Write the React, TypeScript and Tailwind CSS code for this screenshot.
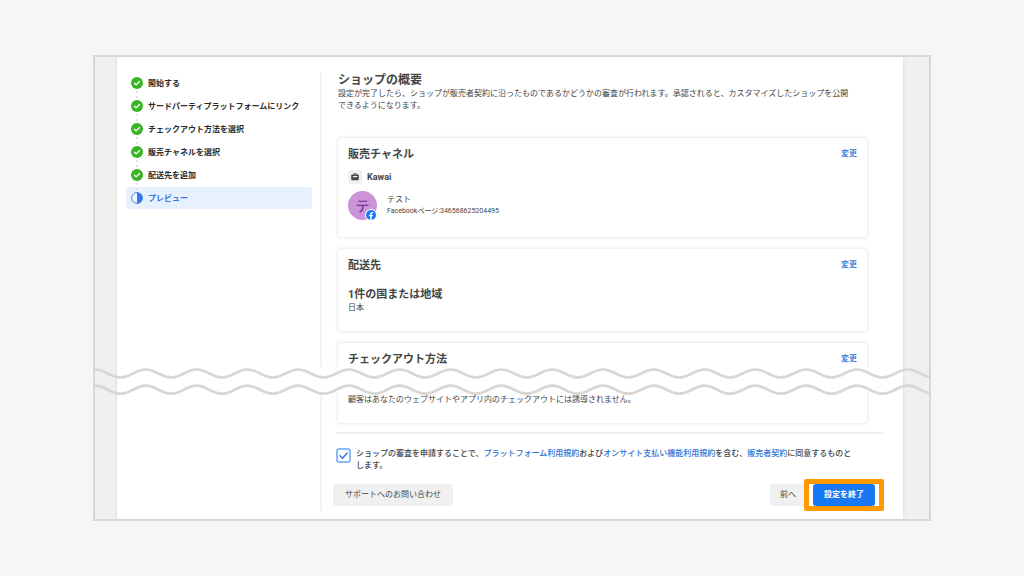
import { useState } from 'react'
import type { ReactNode } from 'react'
import clsx from 'clsx'

const steps = [
  { label: '開始する', done: true },
  { label: 'サードパーティプラットフォームにリンク', done: true },
  { label: 'チェックアウト方法を選択', done: true },
  { label: '販売チャネルを選択', done: true },
  { label: '配送先を追加', done: true },
  { label: 'プレビュー', done: false },
]

function DoneIcon() {
  return (
    <svg viewBox="0 0 12 12" className="size-3 shrink-0" aria-hidden="true">
      <circle cx="6" cy="6" r="6" fill="#3ab425" />
      <path d="M3.5 6.3 5.2 7.9 8.5 4.5" fill="none" stroke="#fff" strokeWidth="1.3" strokeLinecap="round" strokeLinejoin="round" />
    </svg>
  )
}

function CurrentIcon() {
  return (
    <svg viewBox="0 0 12 12" className="size-3 shrink-0" aria-hidden="true">
      <circle cx="6" cy="6" r="5.4" fill="#f4f8ff" stroke="#3578e5" strokeWidth="0.9" />
      <path d="M6 0.4a5.6 5.6 0 0 1 0 11.2z" fill="#3578e5" />
    </svg>
  )
}

function StepList() {
  return (
    <ol className="flex flex-col gap-px">
      {steps.map((step, i) => (
        <li key={step.label} className="relative">
          <a
            href="#"
            aria-current={step.done ? undefined : 'step'}
            className={clsx(
              'flex h-[22px] items-center gap-[5px] rounded-[3px] pl-[5px] text-[8px] font-bold whitespace-nowrap',
              step.done ? 'text-[#2b2b2b]' : 'bg-[#e7f0fd] text-[#3474dc]'
            )}
          >
            {step.done ? <DoneIcon /> : <CurrentIcon />}
            <span className="pt-px">{step.label}</span>
          </a>
          {i < steps.length - 1 && (
            <span className="absolute top-[19px] left-[10px] z-10 flex flex-col gap-[3px]">
              <span className="size-[2px] rounded-full bg-[#dcdcdc]" />
              <span className="size-[2px] rounded-full bg-[#dcdcdc]" />
            </span>
          )}
        </li>
      ))}
    </ol>
  )
}

function CardHeader({ title }: { title: string }) {
  return (
    <div className="flex items-start justify-between">
      <h2 className="text-[11px] leading-[14px] font-bold text-[#444]">{title}</h2>
      <a href="#" className="text-[8px] leading-3 font-medium text-[#2f71d0]">変更</a>
    </div>
  )
}

function Card({ children, className }: { children: ReactNode; className?: string }) {
  return (
    <section className={clsx('border border-[#f0f0f0] bg-white px-[10px] shadow-[0_0_3px_rgba(0,0,0,0.08)]', className)}>
      {children}
    </section>
  )
}

// one period is 50.8 units wide, starting on a crest
function wave(y: number) {
  let d = `M0 ${y}`
  for (let i = 0; i < 17; i++) {
    d += ' c10 0 15.4 8 25.4 8 s15.4 -8 25.4 -8'
  }
  return d
}

function TornEdge() {
  return (
    <div className="relative z-10 -mr-[26px] -ml-[22px] h-[26px]">
      <div className="mr-[26px] ml-[22px] h-full bg-white" />
      <svg viewBox="0 0 834 30" preserveAspectRatio="none" className="absolute top-0 left-0 h-[30px] w-full" aria-hidden="true">
        <path d={wave(2.5)} fill="none" stroke="#dad6d3" strokeWidth="2.7" />
        <path d={wave(18.7)} fill="none" stroke="#dad6d3" strokeWidth="2.7" />
      </svg>
    </div>
  )
}

function ChannelCard() {
  return (
    <Card className="h-[101px] rounded-[4px] pt-[10px]">
      <CardHeader title="販売チャネル" />
      <div className="mt-2 flex items-center gap-[5px]">
        <span className="grid size-[14px] place-items-center rounded-[3px] bg-[#f0f0f0]">
          <svg viewBox="0 0 8 8" className="size-2" aria-hidden="true">
            <path d="M2.6 1.4V.8h3v.8" fill="none" stroke="#444" strokeWidth=".8" />
            <rect x="0.2" y="1.4" width="7.6" height="5.8" rx="1" fill="#444" />
            <path d="M1.4 4.2 2.4 3h4.4L5.6 4.2z" fill="#f0f0f0" />
          </svg>
        </span>
        <h3 className="text-[9px] leading-[14px] font-bold text-[#444]">Kawai</h3>
      </div>
      <div className="mt-[7px] flex items-center gap-[10px]">
        <div className="relative grid size-[29px] place-items-center rounded-full bg-[#cc93d9] text-[14px] leading-none font-medium text-[#713c91]">
          テ
          <svg viewBox="0 0 12 12" className="absolute right-0 -bottom-px size-3" aria-hidden="true">
            <circle cx="6" cy="6" r="6" fill="#fff" />
            <circle cx="6" cy="6" r="5" fill="#1877f2" />
            <path d="M5.2 11V7.3H4V5.9h1.2V5c0-1.3.8-2 1.9-2 .4 0 .8 0 1 .1v1.2h-.6c-.6 0-.8.4-.8.8v.8H8l-.2 1.4H6.7V11z" fill="#fff" />
          </svg>
        </div>
        <div>
          <p className="text-[8px] leading-[11px] text-[#444]">テスト</p>
          <p className="text-[7px] leading-3 text-[#444]">Facebookページ:346568625204495</p>
        </div>
      </div>
    </Card>
  )
}

export default function App() {
  const [agreed, setAgreed] = useState(true)

  return (
    <main className="min-h-screen bg-[#f6f6f6] px-[93px] py-[55px] font-['Roboto','Noto_Sans_CJK_JP',sans-serif]">
      <div className="overflow-hidden border-2 border-[#dad6d3] bg-[#f0f0f0] pr-[26px] pl-[22px]">
        <div className="bg-white shadow-[0_0_3px_rgba(0,0,0,0.12)]">
          <div className="flex h-[310px] pt-[15px]">
            <nav className="w-[205px] shrink-0 border-r-2 border-[#f3f3f3] pr-2 pl-[9px]">
              <StepList />
            </nav>
            <div className="min-w-0 flex-1 overflow-hidden pr-[35px] pl-[15px]">
              <h1 className="pl-px text-[12px] leading-4 font-bold text-[#444]">ショップの概要</h1>
              <p className="-mr-5 pl-px text-[8px] leading-3 text-[#444]">
                設定が完了したら、ショップが販売者契約に沿ったものであるかどうかの審査が行われます。承認されると、カスタマイズしたショップを公開
                <br />
                できるようになります。
              </p>
              <div className="mt-[25px] flex flex-col gap-[10px]">
                <ChannelCard />
                <Card className="h-[84px] rounded-[4px] pt-[10px]">
                  <CardHeader title="配送先" />
                  <h3 className="mt-[15px] text-[11px] leading-[14px] font-bold text-[#444]">1件の国または地域</h3>
                  <p className="text-[8px] leading-3 text-[#444]">日本</p>
                </Card>
                <Card className="rounded-t-[4px] border-b-0 pt-[10px] pb-1">
                  <CardHeader title="チェックアウト方法" />
                </Card>
              </div>
            </div>
          </div>

          <TornEdge />

          <div className="flex pb-2">
            <div className="w-[205px] shrink-0 border-r-2 border-[#f3f3f3]" />
            <div className="min-w-0 flex-1 pr-[19px] pl-[11px]">
              <Card className="mr-4 ml-1 rounded-b-[4px] border-t-0 pt-px pb-[17px]">
                <p className="text-[8px] leading-3 text-[#444]">
                  顧客はあなたのウェブサイトやアプリ内のチェックアウトには誘導されません。
                </p>
              </Card>
              <hr className="mt-2 ml-[3px] border-t-2 border-[#f0f0f0]" />
              <div className="mt-[14px] ml-[3px] flex gap-[5px]">
                <span className="relative size-[15px] shrink-0">
                  <input
                    id="agree"
                    type="checkbox"
                    checked={agreed}
                    onChange={(e) => setAgreed(e.target.checked)}
                    className="block size-[15px] appearance-none rounded-[3px] border-2 border-[#8db9f8] bg-white"
                  />
                  {agreed && (
                    <svg viewBox="0 0 15 15" className="pointer-events-none absolute inset-0 size-[15px]" aria-hidden="true">
                      <path d="M4 7.8 6.5 10.2 11.2 5" fill="none" stroke="#2f78ea" strokeWidth="1.5" strokeLinecap="round" strokeLinejoin="round" />
                    </svg>
                  )}
                </span>
                <label htmlFor="agree" className="text-[8px] leading-3 font-medium text-[#444]">
                  ショップの審査を申請することで、
                  <a href="#" className="text-[#2f71d0]">プラットフォーム利用規約</a>
                  および
                  <a href="#" className="text-[#2f71d0]">オンサイト支払い機能利用規約</a>
                  を含む、
                  <a href="#" className="text-[#2f71d0]">販売者契約</a>
                  に同意するものと
                  <br />
                  します。
                </label>
              </div>
              <div className="mt-[7px] flex items-center">
                <button type="button" className="h-[22px] rounded-[3px] bg-[#f0f0f0] px-3 text-[8px] text-[#444]">
                  サポートへのお問い合わせ
                </button>
                <button type="button" className="ml-auto h-[22px] rounded-l-[3px] bg-[#f0f0f0] pr-2 pl-[10px] text-[8px] text-[#444]">
                  前へ
                </button>
                <div className="rounded-[2px] border-[5px] border-[#ff9900] bg-white px-1">
                  <button type="button" className="block h-[22px] rounded-[3px] bg-[#1877f2] px-[11px] text-[8px] font-bold text-white">
                    設定を終了
                  </button>
                </div>
              </div>
            </div>
          </div>
        </div>
      </div>
    </main>
  )
}
